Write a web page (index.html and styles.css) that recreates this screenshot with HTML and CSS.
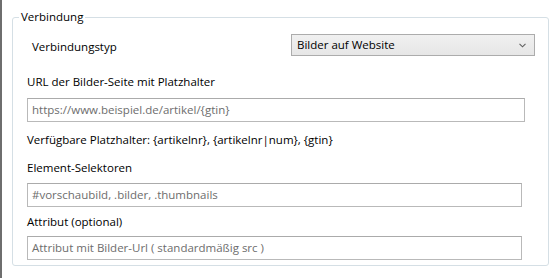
FILE: index.html
```html
<!DOCTYPE html>
<html lang="de">
<head>
<meta charset="utf-8">
<title>Verbindung</title>
<link rel="stylesheet" href="styles.css">
</head>
<body>
<div class="page">
  <div class="edge"></div>
  <fieldset class="group">
    <legend class="group-title">Verbindung</legend>
    <div class="row-type">
      <span class="type-label">Verbindungstyp</span>
      <div class="combo">
        <span class="combo-text">Bilder auf Website</span>
        <svg class="chevron" width="7" height="5" viewBox="0 0 7 5"><path d="M0.5 0.8 L3.5 3.8 L6.5 0.8" fill="none" stroke="#606060" stroke-width="1.1"/></svg>
      </div>
    </div>
    <div class="field-label first">URL der Bilder-Seite mit Platzhalter</div>
    <div class="input wide"><span class="placeholder">https://www.beispiel.de/artikel/{gtin}</span></div>
    <div class="hint">Verfügbare Platzhalter: {artikelnr}, {artikelnr|num}, {gtin}</div>
    <div class="field-label">Element-Selektoren</div>
    <div class="input"><span class="placeholder">#vorschaubild, .bilder, .thumbnails</span></div>
    <div class="field-label attr">Attribut (optional)</div>
    <div class="input last"><span class="placeholder">Attribut mit Bilder-Url ( standardmäßig src )</span></div>
  </fieldset>
</div>
</body>
</html>
```
FILE: styles.css
```css
html, body {
  margin: 0;
  padding: 0;
  background: #ffffff;
}
body {
  font-family: "Open Sans", "Noto Sans", sans-serif;
  font-size: 11.5px;
  line-height: 16px;
  color: #000000;
}
.page {
  display: flex;
  align-items: flex-start;
  width: 560px;
  height: 278px;
}
.edge {
  width: 2px;
  height: 278px;
  background: #6e6e6e;
  flex: none;
}
.group {
  margin: 9px 0 0 10px;
  padding: 0 0 5px 14px;
  width: 537px;
  box-sizing: border-box;
  border: 1px solid #d5dfe5;
  border-radius: 3px;
  min-width: 0;
}
.group-title {
  padding: 0 2px;
  margin-left: -8px;
  line-height: 16px;
}
.row-type {
  display: flex;
  align-items: flex-start;
  margin-top: 9px;
}
.type-label {
  padding: 5px 0 0 5px;
  width: 259px;
}
.combo {
  width: 244px;
  height: 22px;
  box-sizing: border-box;
  border: 1px solid #acacac;
  background: linear-gradient(#f0f0f0, #e6e6e6);
  display: flex;
  align-items: center;
  justify-content: space-between;
  padding: 0 8px 0 5px;
}
.combo-text {
  line-height: 16px;
}
.chevron {
  display: block;
}
.field-label {
  margin-top: 12px;
}
.field-label.first {
  margin-top: 18px;
}
.field-label.attr {
  margin-top: 7px;
}
.input {
  margin-top: 7px;
  width: 495px;
  height: 24px;
  box-sizing: border-box;
  border: 1px solid #b9b9b9;
  border-top-color: #ababab;
  background: #ffffff;
  padding: 3px 4px;
  display: flex;
  align-items: center;
}
.input.wide {
  width: 498px;
  margin-top: 8px;
}
.input.last {
  margin-top: 6px;
}
.placeholder {
  color: #6d6d6d;
  white-space: nowrap;
}
.hint {
  margin-top: 10px;
}
```
